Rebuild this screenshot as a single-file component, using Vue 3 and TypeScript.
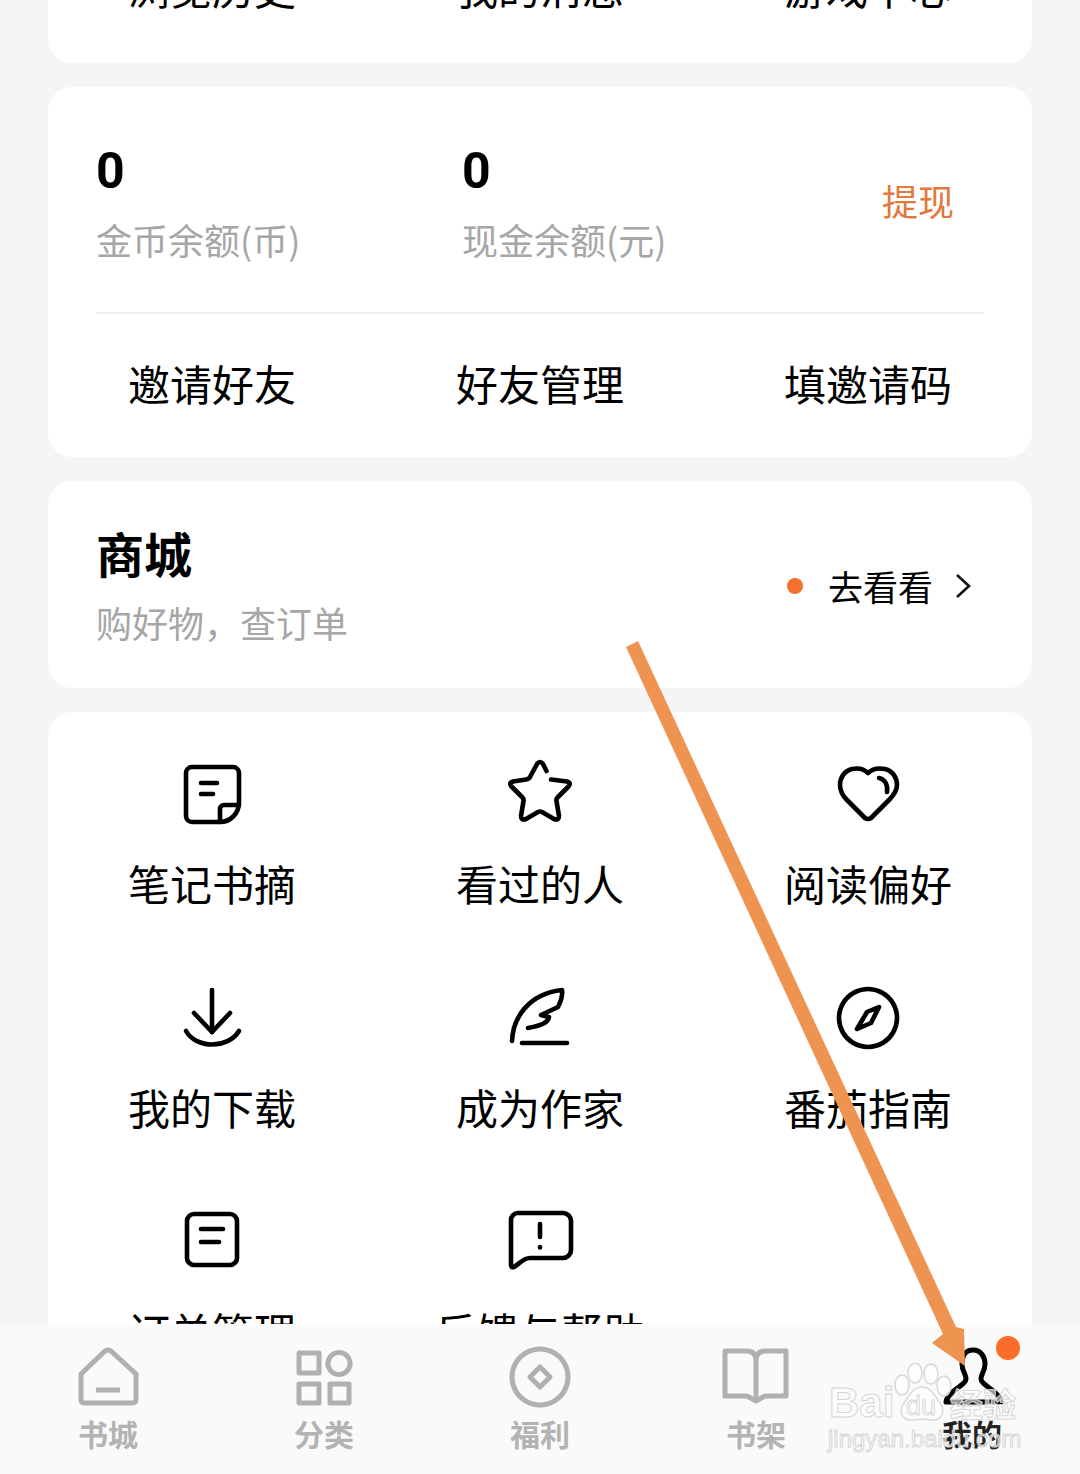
<script setup lang="ts">
interface GridItem {
  label: string
  paths: string[]
}

const topLinks = ['浏览历史', '我的消息', '游戏中心']
const inviteLinks = ['邀请好友', '好友管理', '填邀请码']

const tools: GridItem[] = [
  {
    label: '笔记书摘',
    paths: [
      'M16 9H57a6 6 0 0 1 6 6V44C63 56 54 64 44 64H16a6 6 0 0 1-6-6V15a6 6 0 0 1 6-6Z',
      'M44 64V51a4 4 0 0 1 4-4H63',
      'M25 25H41',
      'M25 36H37'
    ]
  },
  {
    label: '看过的人',
    paths: [
      'M42.5 13L39 6Q36 2 33 6L26 19Q25 21 22 21.5L9 23.5Q4 25 8 29L18 39Q20 41 19.5 43L17 58Q17 63 22 61L34 54Q36 53 38 54L50 61Q55 63 55 58L52.5 43Q52 41 54 39L64 29Q68 25 63 23.5L47 21.5'
    ]
  },
  {
    label: '阅读偏好',
    paths: [
      'M36 15C31 10 25 10 20 11C12 13 8 20 8 27C8 33 11 38 15 42L33 60Q36 62 39 60L57 42C61 38 65 33 65 27C65 20 61 13 53 11C48 10 41 10 36 15Z',
      'M47 20C53 21 56 27 55 34'
    ]
  },
  {
    label: '我的下载',
    paths: ['M36 8V50', 'M18 31L36 50L54 31', 'M10 49C20 67 52 67 63 49']
  },
  {
    label: '成为作家',
    paths: [
      'M8 59C9 36 24 12 58 8C59 14 56 21 54 25L37 33L45 35C44 40 40 43 24 46',
      'M18 61H63'
    ]
  },
  {
    label: '番茄指南',
    paths: [
      'M36 7a29 29 0 1 0 0.01 0Z',
      'M47 25L35 30L25 47L39 41Z'
    ]
  },
  {
    label: '订单管理',
    paths: [
      'M18 8H54a7 7 0 0 1 7 7V52a7 7 0 0 1-7 7H18a7 7 0 0 1-7-7V15a7 7 0 0 1 7-7Z',
      'M25 23H47',
      'M25 36H43'
    ]
  },
  {
    label: '反馈与帮助',
    paths: [
      'M14 7H59a8 8 0 0 1 8 8V44a8 8 0 0 1-8 8H26C19 52 14 59 10 61Q7 62 7 59V14a7 7 0 0 1 7-7Z',
      'M36 18V31',
      'M36 41V41.5'
    ]
  }
]

interface Tab extends GridItem {
  active?: boolean
}

const tabs: Tab[] = [
  {
    label: '书城',
    paths: [
      'M9 33L33 10Q36 8 39 10L64 33V58Q64 62 60 62H12Q9 62 9 58Z',
      'M24 49H48'
    ]
  },
  {
    label: '分类',
    paths: [
      'M11 12H31V32H11Z',
      'M51 11.5a11 11 0 1 0 0.01 0Z',
      'M11 43H31V62H11Z',
      'M42 43H61V62H42Z'
    ]
  },
  {
    label: '福利',
    paths: [
      'M36 8a28 28 0 1 0 0.01 0Z',
      'M36 26L46 36L36 46L26 36Z'
    ]
  },
  {
    label: '书架',
    paths: [
      'M5 10H27Q36 10 36 20Q36 10 45 10H66V55H45L36 60L27 55H5Z',
      'M36 20V58'
    ]
  },
  {
    label: '我的',
    active: true,
    paths: [
      'M37 9C29 9 26 16 26 23C26 30 30 33 30 38C30 44 11 51 10 61H65C64 51 45 44 45 38C45 33 49 30 49 23C49 16 45 9 37 9Z'
    ]
  }
]
</script>

<template>
  <div class="page">
    <main class="scroller">
      <section class="card top-card">
        <span v-for="link in topLinks" :key="link" class="cell-label">{{ link }}</span>
      </section>

      <section class="card wallet">
        <div class="balances">
          <div class="balance">
            <div class="amount">0</div>
            <div class="muted">金币余额(币)</div>
          </div>
          <div class="balance">
            <div class="amount">0</div>
            <div class="muted">现金余额(元)</div>
          </div>
          <span class="withdraw">提现</span>
        </div>
        <div class="divider"></div>
        <div class="invites">
          <span v-for="link in inviteLinks" :key="link" class="cell-label">{{ link }}</span>
        </div>
      </section>

      <section class="card shop">
        <div>
          <div class="shop-title">商城</div>
          <div class="muted shop-sub">购好物，查订单</div>
        </div>
        <div class="shop-link">
          <i class="dot"></i>
          <span>去看看</span>
          <svg width="18" height="26" viewBox="0 0 18 26" class="chevron">
            <path d="M3 2L15 13L3 24" />
          </svg>
        </div>
      </section>

      <section class="card tools">
        <div v-for="tool in tools" :key="tool.label" class="tool">
          <svg width="72" height="72" viewBox="0 0 72 72" class="tool-icon">
            <path v-for="d in tool.paths" :key="d" :d="d" />
          </svg>
          <span class="cell-label">{{ tool.label }}</span>
        </div>
      </section>
    </main>

    <nav class="tabbar">
      <div v-for="tab in tabs" :key="tab.label" class="tab" :class="{ active: tab.active }">
        <svg width="72" height="72" viewBox="0 0 72 72" class="tab-icon">
          <path v-for="d in tab.paths" :key="d" :d="d" />
        </svg>
        <span>{{ tab.label }}</span>
      </div>
    </nav>

    <i class="badge"></i>

    <!-- baidu watermark sits over the tab bar -->
    <div class="watermark">
      <svg width="60" height="60" viewBox="0 0 60 60" class="paw">
        <ellipse cx="10" cy="22" rx="7" ry="10" />
        <ellipse cx="23" cy="10" rx="7" ry="10" />
        <ellipse cx="39" cy="11" rx="7" ry="10" />
        <ellipse cx="52" cy="23" rx="7" ry="10" />
        <path d="M30 24C20 24 17 34 12 40C6 47 10 58 20 57C26 56 34 56 40 57C50 58 54 47 48 40C43 34 40 24 30 24Z" />
      </svg>
      <span class="wm-bai">Bai</span>
      <span class="wm-du">du</span>
      <span class="wm-cn">经验</span>
      <span class="wm-url">jingyan.baidu.com</span>
    </div>

    <!-- annotation arrow drawn on top of the screenshot -->
    <svg class="arrow" width="1080" height="1474" viewBox="0 0 1080 1474">
      <path d="M626 647L638 641L956 1327L964 1329L965 1366L932 1343L943 1334Z" />
    </svg>
  </div>
</template>

<style scoped>
.page {
  position: relative;
  display: flex;
  flex-direction: column;
  width: 1080px;
  height: 1474px;
  overflow: hidden;
  background: #f5f5f5;
  color: #000;
  font-family: "Noto Sans CJK SC", "Noto Sans", sans-serif;
}

.scroller {
  flex: 1;
  min-height: 0;
  overflow: hidden;
  display: flex;
  flex-direction: column;
  gap: 24px;
  padding: 0 48px;
}

.card {
  flex-shrink: 0;
  background: #fff;
  border-radius: 24px;
}

.cell-label {
  font-size: 42px;
  line-height: 50px;
  text-align: center;
  white-space: nowrap;
}

/* the page is scrolled: only the bottom of this card is still in view */
.top-card {
  height: 63px;
  box-sizing: border-box;
  padding-bottom: 51px;
  border-radius: 0 0 24px 24px;
  display: grid;
  grid-template-columns: repeat(3, 1fr);
  align-content: end;
}

.wallet {
  padding: 56px 0 49px;
}

.balances {
  display: flex;
  align-items: center;
  padding-left: 48px;
}

.balance {
  width: 366px;
}

.amount {
  font-family: Roboto, sans-serif;
  font-size: 50px;
  line-height: 56px;
  font-weight: 700;
  color: #000;
}

.muted {
  font-size: 36px;
  line-height: 50px;
  color: #a6a6a6;
}

.balance .muted {
  margin-top: 15px;
}

.withdraw {
  margin: 0 0 8px 54px;
  font-size: 36px;
  line-height: 50px;
  color: #e2783a;
}

.divider {
  height: 2px;
  margin: 48px 48px 44px;
  background: #ececec;
}

.invites {
  display: grid;
  grid-template-columns: repeat(3, 1fr);
}

.shop {
  height: 207px;
  box-sizing: border-box;
  padding: 43px 60px 0 48px;
  display: flex;
  justify-content: space-between;
}

.shop-title {
  font-size: 48px;
  line-height: 56px;
  font-weight: 700;
  color: #000;
}

.shop-sub {
  margin-top: 20px;
  line-height: 44px;
}

.shop-link {
  display: flex;
  align-items: center;
  height: 124px;
  font-size: 35px;
  line-height: 50px;
}

.dot {
  width: 16px;
  height: 16px;
  margin-right: 25px;
  border-radius: 50%;
  background: #f4702c;
}

.chevron {
  margin-left: 21px;
  fill: none;
  stroke: #111;
  stroke-width: 2.6;
}

.tools {
  padding-top: 46px;
  display: grid;
  grid-template-columns: repeat(3, 1fr);
  row-gap: 74px;
}

.tool {
  display: flex;
  flex-direction: column;
  align-items: center;
  gap: 28px;
}

.tool-icon {
  fill: none;
  stroke: #000;
  stroke-width: 4.6;
  stroke-linecap: round;
  stroke-linejoin: round;
}

.tabbar {
  position: relative;
  flex-shrink: 0;
  height: 150px;
  box-sizing: border-box;
  padding-top: 17px;
  background: #fafafa;
  display: grid;
  grid-template-columns: repeat(5, 1fr);
}

.tab {
  display: flex;
  flex-direction: column;
  align-items: center;
  font-size: 30px;
  line-height: 40px;
  font-weight: 700;
  color: #b3b3b3;
}

.tab.active {
  color: #222;
}

.tab-icon {
  fill: none;
  stroke: #b0b0b0;
  stroke-width: 5;
  stroke-linejoin: round;
}

.tab.active .tab-icon {
  stroke: #000;
}

.badge {
  position: absolute;
  left: 996px;
  top: 1336px;
  width: 24px;
  height: 24px;
  border-radius: 50%;
  background: #f96c2a;
}

.watermark {
  position: absolute;
  left: 826px;
  top: 1355px;
  width: 200px;
  height: 96px;
  color: rgba(255, 255, 255, 0.6);
  font-family: "Liberation Sans", sans-serif;
  -webkit-text-stroke: 1px #d6d6d6;
}

.watermark span {
  position: absolute;
  white-space: nowrap;
}

.paw {
  position: absolute;
  left: 66px;
  top: 8px;
  fill: rgba(255, 255, 255, 0.5);
  stroke: #d8d8d8;
  stroke-width: 1.5;
}

.wm-bai {
  left: 3px;
  top: 26px;
  font-size: 42px;
  line-height: 44px;
  font-weight: 700;
}

.wm-du {
  left: 80px;
  top: 36px;
  font-size: 27px;
  line-height: 30px;
}

.wm-cn {
  left: 124px;
  top: 28px;
  font-family: "Noto Sans CJK SC", sans-serif;
  font-size: 33px;
  line-height: 40px;
  font-weight: 700;
}

.wm-url {
  left: 2px;
  top: 70px;
  font-size: 24px;
  line-height: 28px;
}

.arrow {
  position: absolute;
  left: 0;
  top: 0;
  pointer-events: none;
  fill: #ef9350;
}
</style>
